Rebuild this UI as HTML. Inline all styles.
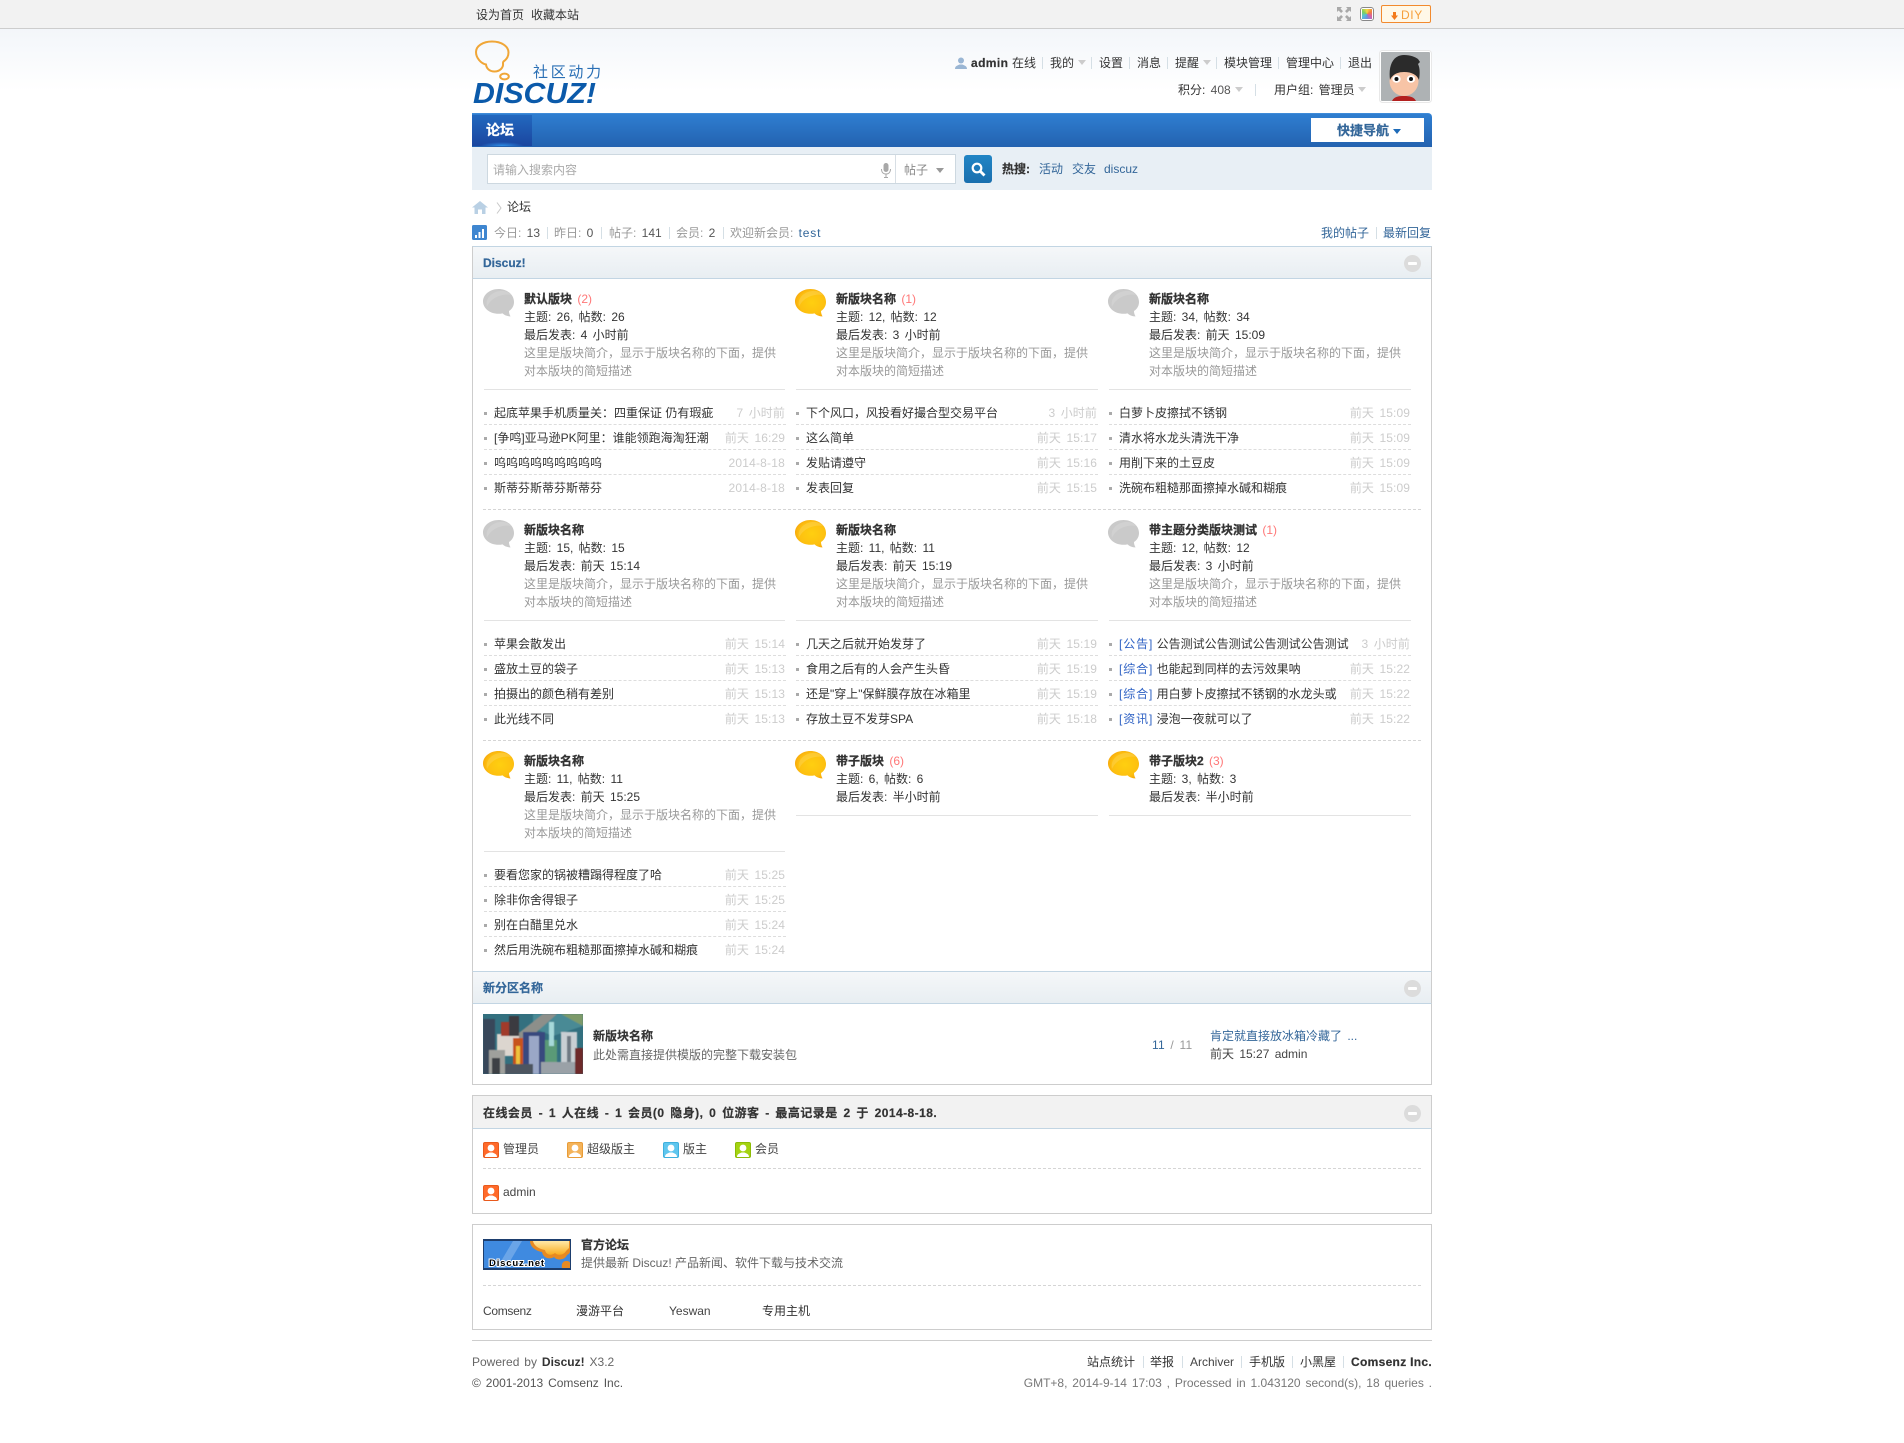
<!DOCTYPE html>
<html lang="zh"><head><meta charset="utf-8"><title>论坛 - Discuz!</title>
<style>
*{box-sizing:border-box;margin:0;padding:0}
html,body{width:1904px;height:1443px;overflow:hidden;background:#fff}
body{position:relative;font:12px/16px "Liberation Sans","WenQuanYi Zen Hei","Noto Sans CJK SC",sans-serif;color:#444;word-spacing:2px}
.a,.t{position:absolute}
.t{white-space:nowrap}
.b{font-weight:bold;-webkit-text-stroke:.2px}
.l{color:#369}
.g{color:#999}
.sep{position:absolute;color:#cdd;width:1px;height:12px;background:#d5dfe5}
.arr{position:absolute;width:0;height:0;border:4px solid transparent;border-top:5px solid #ccc;border-bottom:0}
.box{position:absolute;left:472px;width:960px;border:1px solid #cdcdcd}
.hd{position:absolute;left:472px;width:960px;height:33px;border:1px solid #c2d5e3;border-left-color:#cdcdcd;border-right-color:#cdcdcd;background:linear-gradient(#f5f7f9,#e8eef2)}
.col{position:absolute;left:1404px;width:17px;height:17px;border-radius:50%;background:#dcdcdc}
.col:after{content:"";position:absolute;left:4px;top:7px;width:9px;height:3px;background:#fff;border-radius:1px}
.f{position:absolute;width:302px}
.f svg{position:absolute;left:0;top:0}
.f div{position:absolute;left:41px;white-space:nowrap;height:18px;line-height:18px;color:#333}
.f .n{top:1px;font-weight:bold;font-size:12px;color:#333;word-spacing:0;-webkit-text-stroke:.3px}
.f .n i{font-style:normal;font-weight:normal;color:#f77;margin-left:2px;-webkit-text-stroke:0}
.f .s{top:19px}.f .m{top:37px}.f .d1{top:55px;color:#999}.f .d2{top:73px;color:#999}
.hr{position:absolute;height:1px;background:#e3e3e3}
.ul{position:absolute;width:302px}
.ul p{position:relative;height:25px;line-height:26px;border-bottom:1px dashed #ddd;padding-left:10px;white-space:nowrap;color:#333;word-spacing:0}
.ul p:last-child{border-bottom:0}
.ul p:before{content:"";position:absolute;left:0;top:12px;width:3px;height:3px;background:#aaa}
.ul p b{position:absolute;right:1px;top:0;font-weight:normal;color:#ccc;word-spacing:2px;letter-spacing:.1px}
.ul p u{text-decoration:none;color:#2f62c4;letter-spacing:.9px}
.dash{position:absolute;height:1px;border-top:1px dashed #d5d5d5}
.u{position:absolute;width:16px;height:16px;border-radius:2px}
</style></head><body>
<svg width="0" height="0" style="position:absolute"><defs>
<radialGradient id="gd" cx=".55" cy=".5" r=".6"><stop offset="0" stop-color="#ffcf10"/><stop offset=".7" stop-color="#fdc010"/><stop offset="1" stop-color="#f6a40c"/></radialGradient>
<symbol id="bub" viewBox="0 0 31 28"><path d="M15.5 0C24 0 31 5.5 31 13c0 4-2 7-5 9 0 2 .6 4 1.6 5.4-3 0-6-1-8-3-1.400.3-2.800.4-4.100.4C7 24.800 0 19.300 0 12.500 0 5.500 7 0 15.500 0z"/><path d="M4 18C2 9 9 3 17 2c5-.5 9 1 11 4C20 4.500 8 8 4 18z" fill="#fff" fill-opacity=".14"/></symbol>
<symbol id="usr" viewBox="0 0 14 14"><circle cx="7" cy="5" r="3.400" fill="#fff"/><path d="M1 14c0-3 2.500-3.500 4.500-4.500h3C10.500 10.500 13 11 13 14z" fill="#fff"/></symbol>
</defs></svg>

<!-- top bar -->
<div class="a" style="left:0;top:0;width:1904px;height:29px;background:#f2f2f2;border-bottom:1px solid #cdcdcd"></div>
<div class="a" style="left:0;top:29px;width:1904px;height:62px;background:linear-gradient(#f3f6fa,#fff)"></div>
<span class="t" style="left:476px;top:7px;color:#333">设为首页</span>
<span class="t" style="left:531px;top:7px;color:#333">收藏本站</span>
<svg class="a" style="left:1337px;top:7px" width="14" height="14" viewBox="0 0 14 14" fill="#a9a9a9"><path d="M0 0h5L3.500 1.600 6 4.100 4.100 6 1.600 3.500 0 5zM14 0v5l-1.600-1.500L9.900 6 8 4.100l2.500-2.500L9 0zM0 14V9l1.600 1.500L4.100 8 6 9.900l-2.500 2.500L5 14zM14 14H9l1.500-1.600L8 9.900 9.900 8l2.500 2.500L14 9z"/></svg>
<div class="a" style="left:1360px;top:7px;width:14px;height:14px;border:1px solid #888;border-radius:3px;background:#fff;padding:1px"><div style="width:10px;height:10px;background:conic-gradient(#f6d743,#f0823c,#d95fa8,#6d8fe0,#56c0d8,#7fcf5a,#f6d743)"></div></div>
<div class="a" style="left:1381px;top:5px;width:50px;height:18px;border:1px solid #f28a2e;border-radius:2px;background:#fff8e8"></div>
<svg class="a" style="left:1391px;top:12px" width="7" height="8" viewBox="0 0 7 8"><path d="M2 0h3v3.500h2L3.500 8 0 3.500h2z" fill="#f37b1d"/></svg>
<span class="t" style="left:1401px;top:7px;font-size:12px;color:#f6a03d;letter-spacing:.6px">DIY</span>

<!-- logo -->
<svg class="a" style="left:472px;top:38px" width="132" height="68" viewBox="0 0 132 68">
<path d="M20 3.500C29 3.500 36.500 8 36.500 14.500c0 4-2 7-5 9-.5.5-.5 1-.5 2 .5 4-3 8-8.500 8-5 0-8-3-8.500-7C9 25.500 4 20 4 14 4 8 11 3.500 20 3.500z" fill="none" stroke="#f0a637" stroke-width="2"/>
<ellipse cx="32.500" cy="38.500" rx="4.300" ry="2.900" fill="none" stroke="#f0a637" stroke-width="2"/>
<text x="61" y="39" font-family="'WenQuanYi Zen Hei','Noto Sans CJK SC',sans-serif" font-size="15" fill="#2a6fb5" letter-spacing="2.700" word-spacing="0">社区动力</text>
<text x="1" y="65" font-family="'Liberation Sans',sans-serif" font-weight="bold" font-style="italic" font-size="29" fill="#0b5aaa" textLength="123" lengthAdjust="spacingAndGlyphs">DISCUZ!</text>
</svg>

<!-- user nav -->
<svg class="a" style="left:955px;top:57px" width="12" height="12" viewBox="0 0 12 12"><circle cx="6" cy="3.500" r="3" fill="#9ab6d4"/><path d="M0 12c0-3 2.500-3.500 4.500-4.500h3C9.500 8.500 12 9 12 12z" fill="#9ab6d4"/></svg>
<span class="t b" style="left:971px;top:55px;color:#333;letter-spacing:.4px">admin</span>
<span class="t" style="left:1012px;top:55px;color:#333">在线</span>
<i class="sep" style="left:1042px;top:57px"></i>
<span class="t" style="left:1050px;top:55px;color:#333">我的</span><i class="arr" style="left:1078px;top:60px"></i>
<i class="sep" style="left:1091px;top:57px"></i>
<span class="t" style="left:1099px;top:55px;color:#333">设置</span>
<i class="sep" style="left:1129px;top:57px"></i>
<span class="t" style="left:1137px;top:55px;color:#333">消息</span>
<i class="sep" style="left:1167px;top:57px"></i>
<span class="t" style="left:1175px;top:55px;color:#333">提醒</span><i class="arr" style="left:1203px;top:60px"></i>
<i class="sep" style="left:1216px;top:57px"></i>
<span class="t" style="left:1224px;top:55px;color:#333">模块管理</span>
<i class="sep" style="left:1278px;top:57px"></i>
<span class="t" style="left:1286px;top:55px;color:#333">管理中心</span>
<i class="sep" style="left:1340px;top:57px"></i>
<span class="t" style="left:1348px;top:55px;color:#333">退出</span>
<span class="t" style="left:1178px;top:82px;color:#333">积分: <span style="color:#555">408</span></span><i class="arr" style="left:1235px;top:87px"></i>
<i class="sep" style="left:1255px;top:84px"></i>
<span class="t" style="left:1274px;top:82px;color:#333">用户组: 管理员</span><i class="arr" style="left:1358px;top:87px"></i>
<svg class="a" style="left:1379px;top:50px" width="53" height="53" viewBox="0 0 53 53">
<rect x=".5" y=".5" width="52" height="52" rx="3" fill="#fff" stroke="#e8e8e8"/>
<rect x="2" y="2" width="49" height="49" rx="1" fill="#aeb2b4"/>
<ellipse cx="25" cy="31" rx="14.500" ry="15" fill="#f7c4a6"/>
<path d="M11 30C9 14 15 5 25 5c7 0 11 2 14 4l2 3-2 2c2 4 2 9 1 16-2-5-7-8-15-8-7 0-12 3-14 8z" fill="#2b2b2b"/>
<ellipse cx="17.500" cy="29" rx="4.200" ry="3.800" fill="#fff"/><ellipse cx="32" cy="29" rx="4.200" ry="3.800" fill="#fff"/>
<circle cx="17.500" cy="29" r="2" fill="#111"/><circle cx="32" cy="29" r="2" fill="#111"/>
<path d="M13 51c2-4 6-5 12-5s10 1 12 5z" fill="#b3201f"/>
</svg>

<!-- nav -->
<div class="a" style="left:472px;top:113px;width:960px;height:34px;background:linear-gradient(#2f7ed1,#2362b0);border-top:1px solid #3f8bd8;border-radius:0 4px 0 0"></div>
<div class="a" style="left:472px;top:115px;width:60px;height:31px;background:radial-gradient(ellipse 22px 4px at 50% 100%,#2d8fe8,transparent),linear-gradient(#2268bf,#1b46a0)"></div>
<span class="t b" style="left:486px;top:122px;color:#fff;font-size:14px">论坛</span>
<div class="a" style="left:1311px;top:118px;width:113px;height:24px;background:#fff"></div>
<span class="t b" style="left:1337px;top:123px;color:#369;font-size:13px">快捷导航</span>
<i class="arr" style="left:1393px;top:129px;border-top-color:#1e6bb8"></i>

<!-- search -->
<div class="a" style="left:472px;top:147px;width:960px;height:43px;background:#e8eff5"></div>
<div class="a" style="left:487px;top:154px;width:469px;height:30px;background:#fff;border:1px solid #cdd8e0"></div>
<div class="a" style="left:895px;top:155px;width:1px;height:28px;background:#d8dfe5"></div>
<span class="t" style="left:493px;top:162px;color:#aaa">请输入搜索内容</span>
<svg class="a" style="left:881px;top:163px" width="10" height="15" viewBox="0 0 10 15" fill="#a8a8a8"><rect x="2.500" width="5" height="9" rx="2.500"/><path d="M0 6h1c0 3 1.500 4.500 4 4.500S9 9 9 6h1c0 3.500-2 5.300-4.500 5.500V14H7v1H3v-1h1.500v-2.500C2 11.300 0 9.500 0 6z"/></svg>
<span class="t" style="left:904px;top:162px;color:#888">帖子</span>
<i class="arr" style="left:936px;top:168px;border-top-color:#999"></i>
<div class="a" style="left:964px;top:155px;width:28px;height:28px;background:linear-gradient(#2185c5,#1a6fae);border-radius:3px"></div>
<svg class="a" style="left:971px;top:162px" width="15" height="15" viewBox="0 0 15 15" fill="none" stroke="#fff"><circle cx="6" cy="6" r="4.300" stroke-width="2.200"/><path d="M9.500 9.500l4 4" stroke-width="2.800"/></svg>
<span class="t b" style="left:1002px;top:161px;color:#333">热搜:</span>
<span class="t l" style="left:1039px;top:161px">活动</span>
<span class="t l" style="left:1072px;top:161px">交友</span>
<span class="t l" style="left:1104px;top:161px">discuz</span>

<!-- crumbs -->
<svg class="a" style="left:472px;top:201px" width="16" height="13" viewBox="0 0 16 13"><path d="M8 0l8 6.500h-2.500V13H10V8.500H6V13H2.500V6.500H0z" fill="#b9d0e4"/></svg>
<svg class="a" style="left:496px;top:202px" width="6" height="12" viewBox="0 0 6 12"><path d="M1 .5L5 6 1 11.500" fill="none" stroke="#c8c8c8"/></svg>
<span class="t" style="left:507px;top:199px;color:#333">论坛</span>

<!-- stats -->
<svg class="a" style="left:472px;top:225px" width="15" height="15" viewBox="0 0 15 15"><rect width="15" height="15" rx="1.500" fill="#3f86d0"/><path d="M3 10h2v3H3zM6.500 7h2v6h-2zM10 4h2v9h-2z" fill="#fff"/></svg>
<span class="t g" style="left:494px;top:225px">今日: <span style="color:#555">13</span></span>
<i class="sep" style="left:547px;top:227px"></i>
<span class="t g" style="left:554px;top:225px">昨日: <span style="color:#555">0</span></span>
<i class="sep" style="left:601px;top:227px"></i>
<span class="t g" style="left:609px;top:225px">帖子: <span style="color:#555">141</span></span>
<i class="sep" style="left:669px;top:227px"></i>
<span class="t g" style="left:676px;top:225px">会员: <span style="color:#555">2</span></span>
<i class="sep" style="left:723px;top:227px"></i>
<span class="t g" style="left:730px;top:225px">欢迎新会员: <span class="l" style="letter-spacing:.8px">test</span></span>
<span class="t l" style="left:1321px;top:225px">我的帖子</span>
<i class="sep" style="left:1376px;top:227px"></i>
<span class="t l" style="left:1383px;top:225px">最新回复</span>

<!-- main -->
<div class="box" style="top:246px;height:839px"></div>
<div class="hd" style="top:246px"></div>
<span class="t b l" style="left:483px;top:255px">Discuz!</span>
<i class="col" style="top:255px"></i>

<div class="f" style="left:483px;top:289px"><svg width="31" height="28"><use href="#bub" fill="#cacaca"/></svg><div class="n">默认版块 <i>(2)</i></div><div class="s">主题: 26, 帖数: 26</div><div class="m">最后发表: 4 小时前</div><div class="d1">这里是版块简介，显示于版块名称的下面，提供</div><div class="d2">对本版块的简短描述</div></div>
<div class="f" style="left:795px;top:289px"><svg width="31" height="28"><use href="#bub" fill="url(#gd)"/></svg><div class="n">新版块名称 <i>(1)</i></div><div class="s">主题: 12, 帖数: 12</div><div class="m">最后发表: 3 小时前</div><div class="d1">这里是版块简介，显示于版块名称的下面，提供</div><div class="d2">对本版块的简短描述</div></div>
<div class="f" style="left:1108px;top:289px"><svg width="31" height="28"><use href="#bub" fill="#cacaca"/></svg><div class="n">新版块名称</div><div class="s">主题: 34, 帖数: 34</div><div class="m">最后发表: 前天 15:09</div><div class="d1">这里是版块简介，显示于版块名称的下面，提供</div><div class="d2">对本版块的简短描述</div></div>
<div class="hr" style="left:484px;top:389px;width:301px"></div><div class="hr" style="left:796px;top:389px;width:302px"></div><div class="hr" style="left:1109px;top:389px;width:302px"></div>
<div class="ul" style="left:484px;top:400px"><p>起底苹果手机质量关：四重保证 仍有瑕疵<b>7 小时前</b></p><p>[争鸣]亚马逊PK阿里：谁能领跑海淘狂潮<b>前天 16:29</b></p><p>呜呜呜呜呜呜呜呜呜<b style="letter-spacing:.2px">2014-8-18</b></p><p>斯蒂芬斯蒂芬斯蒂芬<b style="letter-spacing:.2px">2014-8-18</b></p></div>
<div class="ul" style="left:796px;top:400px"><p>下个风口，风投看好撮合型交易平台<b>3 小时前</b></p><p>这么简单<b>前天 15:17</b></p><p>发贴请遵守<b>前天 15:16</b></p><p>发表回复<b>前天 15:15</b></p></div>
<div class="ul" style="left:1109px;top:400px"><p>白萝卜皮擦拭不锈钢<b>前天 15:09</b></p><p>清水将水龙头清洗干净<b>前天 15:09</b></p><p>用削下来的土豆皮<b>前天 15:09</b></p><p>洗碗布粗糙那面擦掉水碱和糊痕<b>前天 15:09</b></p></div>
<div class="dash" style="left:483px;top:509px;width:938px"></div>

<div class="f" style="left:483px;top:520px"><svg width="31" height="28"><use href="#bub" fill="#cacaca"/></svg><div class="n">新版块名称</div><div class="s">主题: 15, 帖数: 15</div><div class="m">最后发表: 前天 15:14</div><div class="d1">这里是版块简介，显示于版块名称的下面，提供</div><div class="d2">对本版块的简短描述</div></div>
<div class="f" style="left:795px;top:520px"><svg width="31" height="28"><use href="#bub" fill="url(#gd)"/></svg><div class="n">新版块名称</div><div class="s">主题: 11, 帖数: 11</div><div class="m">最后发表: 前天 15:19</div><div class="d1">这里是版块简介，显示于版块名称的下面，提供</div><div class="d2">对本版块的简短描述</div></div>
<div class="f" style="left:1108px;top:520px"><svg width="31" height="28"><use href="#bub" fill="#cacaca"/></svg><div class="n">带主题分类版块测试 <i>(1)</i></div><div class="s">主题: 12, 帖数: 12</div><div class="m">最后发表: 3 小时前</div><div class="d1">这里是版块简介，显示于版块名称的下面，提供</div><div class="d2">对本版块的简短描述</div></div>
<div class="hr" style="left:484px;top:620px;width:301px"></div><div class="hr" style="left:796px;top:620px;width:302px"></div><div class="hr" style="left:1109px;top:620px;width:302px"></div>
<div class="ul" style="left:484px;top:631px"><p>苹果会散发出<b>前天 15:14</b></p><p>盛放土豆的袋子<b>前天 15:13</b></p><p>拍摄出的颜色稍有差别<b>前天 15:13</b></p><p>此光线不同<b>前天 15:13</b></p></div>
<div class="ul" style="left:796px;top:631px"><p>几天之后就开始发芽了<b>前天 15:19</b></p><p>食用之后有的人会产生头昏<b>前天 15:19</b></p><p>还是"穿上"保鲜膜存放在冰箱里<b>前天 15:19</b></p><p>存放土豆不发芽SPA<b>前天 15:18</b></p></div>
<div class="ul" style="left:1109px;top:631px"><p><u>[公告]</u> 公告测试公告测试公告测试公告测试<b>3 小时前</b></p><p><u>[综合]</u> 也能起到同样的去污效果呐<b>前天 15:22</b></p><p><u>[综合]</u> 用白萝卜皮擦拭不锈钢的水龙头或<b>前天 15:22</b></p><p><u>[资讯]</u> 浸泡一夜就可以了<b>前天 15:22</b></p></div>
<div class="dash" style="left:483px;top:740px;width:938px"></div>

<div class="f" style="left:483px;top:751px"><svg width="31" height="28"><use href="#bub" fill="url(#gd)"/></svg><div class="n">新版块名称</div><div class="s">主题: 11, 帖数: 11</div><div class="m">最后发表: 前天 15:25</div><div class="d1">这里是版块简介，显示于版块名称的下面，提供</div><div class="d2">对本版块的简短描述</div></div>
<div class="f" style="left:795px;top:751px"><svg width="31" height="28"><use href="#bub" fill="url(#gd)"/></svg><div class="n">带子版块 <i>(6)</i></div><div class="s">主题: 6, 帖数: 6</div><div class="m">最后发表: 半小时前</div></div>
<div class="f" style="left:1108px;top:751px"><svg width="31" height="28"><use href="#bub" fill="url(#gd)"/></svg><div class="n">带子版块2 <i>(3)</i></div><div class="s">主题: 3, 帖数: 3</div><div class="m">最后发表: 半小时前</div></div>
<div class="hr" style="left:484px;top:851px;width:301px"></div><div class="hr" style="left:796px;top:815px;width:302px"></div><div class="hr" style="left:1109px;top:815px;width:302px"></div>
<div class="ul" style="left:484px;top:862px"><p>要看您家的锅被糟蹋得程度了哈<b>前天 15:25</b></p><p>除非你舍得银子<b>前天 15:25</b></p><p>别在白醋里兑水<b>前天 15:24</b></p><p>然后用洗碗布粗糙那面擦掉水碱和糊痕<b>前天 15:24</b></p></div>

<!-- section 2 -->
<div class="hd" style="top:971px"></div>
<span class="t b l" style="left:483px;top:980px">新分区名称</span>
<i class="col" style="top:980px"></i>
<svg class="a" style="left:483px;top:1014px" width="100" height="60" viewBox="0 0 100 60">
<defs><filter id="bl"><feGaussianBlur stdDeviation=".5"/></filter></defs>
<rect width="100" height="60" fill="#33707f"/>
<g filter="url(#bl)">
<path d="M50 0h50v12L70 22 50 14z" fill="#4a8a95"/><path d="M78 0h22v12z" fill="#7d9a6a"/><path d="M60 0h14L40 30 32 22z" fill="#8d8f8a"/>
<rect x="0" y="5" width="12" height="55" fill="#39465a"/><rect x="14" y="20" width="22" height="22" fill="#dcd6cf"/><rect x="18" y="8" width="14" height="14" fill="#a13a2a"/><rect x="26" y="2" width="10" height="20" fill="#3a3a40"/>
<rect x="30" y="24" width="12" height="36" fill="#c7531d"/><rect x="33" y="32" width="4" height="20" fill="#eec23c"/><rect x="40" y="18" width="22" height="42" fill="#384a7e"/><rect x="46" y="22" width="10" height="38" fill="#9aa7c7"/><rect x="62" y="26" width="12" height="34" fill="#5a9a77"/><rect x="66" y="8" width="5" height="24" fill="#a6d9d9"/>
<rect x="78" y="18" width="16" height="38" fill="#c9cfd3"/><rect x="84" y="22" width="4" height="30" fill="#6f7a83"/><rect x="92" y="34" width="8" height="26" fill="#6e2a2c"/><rect x="6" y="36" width="16" height="24" fill="#9fa09c"/><rect x="9" y="44" width="8" height="16" fill="#3c3f44"/><rect x="22" y="50" width="28" height="10" fill="#4e5560"/><rect x="58" y="48" width="34" height="12" fill="#9aa1a7"/>
</g>
</svg>
<span class="t b" style="left:593px;top:1028px;color:#333">新版块名称</span>
<span class="t" style="left:593px;top:1047px;color:#666">此处需直接提供模版的完整下载安装包</span>
<span class="t" style="left:1152px;top:1037px;color:#369;letter-spacing:.2px">11 <span style="color:#999">/ 11</span></span>
<span class="t l" style="left:1210px;top:1028px">肯定就直接放冰箱冷藏了 ...</span>
<span class="t" style="left:1210px;top:1046px;color:#444">前天 15:27 admin</span>

<!-- online -->
<div class="box" style="top:1095px;height:119px"></div>
<div class="a" style="left:472px;top:1095px;width:960px;height:34px;background:#f2f2f2;border:1px solid #cdcdcd;border-bottom-color:#c2d5e3"></div>
<span class="t b" style="left:483px;top:1105px;color:#333;letter-spacing:.45px">在线会员 - 1 人在线 - 1 会员(0 隐身), 0 位游客 - 最高记录是 2 于 2014-8-18.</span>
<i class="col" style="top:1105px"></i>
<div class="u" style="left:483px;top:1142px;background:#ff6a2a;border:1px solid #e95a1c"><svg width="14" height="14"><use href="#usr"/></svg></div>
<span class="t" style="left:503px;top:1141px">管理员</span>
<div class="u" style="left:567px;top:1142px;background:#f4b35a;border:1px solid #e89c38"><svg width="14" height="14"><use href="#usr"/></svg></div>
<span class="t" style="left:587px;top:1141px">超级版主</span>
<div class="u" style="left:663px;top:1142px;background:#5fc6ee;border:1px solid #3fb0dd"><svg width="14" height="14"><use href="#usr"/></svg></div>
<span class="t" style="left:683px;top:1141px">版主</span>
<div class="u" style="left:735px;top:1142px;background:#a4d311;border:1px solid #8cbb05"><svg width="14" height="14"><use href="#usr"/></svg></div>
<span class="t" style="left:755px;top:1141px">会员</span>
<div class="dash" style="left:483px;top:1168px;width:938px"></div>
<div class="u" style="left:483px;top:1185px;background:#ff6a2a;border:1px solid #e95a1c"><svg width="14" height="14"><use href="#usr"/></svg></div>
<span class="t" style="left:503px;top:1184px">admin</span>

<!-- links -->
<div class="box" style="top:1224px;height:106px"></div>
<svg class="a" style="left:483px;top:1239px" width="88" height="31" viewBox="0 0 88 31">
<defs><linearGradient id="ln" x1="0" y1="0" x2="0" y2="1"><stop offset="0" stop-color="#ffe9a8"/><stop offset="1" stop-color="#f9ad1f"/></linearGradient></defs>
<rect width="88" height="31" fill="#1d3e6e"/><rect x="1" y="2" width="86" height="27" fill="#3f8ae0"/>
<path d="M14 29L30 2h9L23 29z" fill="#6aa5e8"/>
<path d="M47 2c0 6 6 10 12 11 1 6 8 8 12 5 3 4 11 3 13-2 2-1 3-2 3-4V2z" fill="#e78a22"/>
<path d="M50 2c1 5 6 8 12 9 1 5 6 6 10 3 3 3 9 2 11-2 1-1 2-2 3-3V2z" fill="url(#ln)"/>
<path d="M79 29c-1-4 1-7 4-7s4 1 4 2v5z" fill="#e78a22"/>
<text x="6" y="27" font-family="'Liberation Sans',sans-serif" font-weight="bold" font-size="9.500" fill="#000" stroke="#fff" stroke-width="2" paint-order="stroke" textLength="55" word-spacing="0">Discuz.net</text>
</svg>
<span class="t b" style="left:581px;top:1237px;color:#333">官方论坛</span>
<span class="t" style="left:581px;top:1255px;color:#666;word-spacing:0">提供最新 Discuz! 产品新闻、软件下载与技术交流</span>
<div class="dash" style="left:483px;top:1285px;width:938px"></div>
<span class="t" style="left:483px;top:1303px;color:#444;letter-spacing:-.3px">Comsenz</span>
<span class="t" style="left:576px;top:1303px;color:#333">漫游平台</span>
<span class="t" style="left:669px;top:1303px;color:#444">Yeswan</span>
<span class="t" style="left:762px;top:1303px;color:#333">专用主机</span>

<!-- footer -->
<div class="a" style="left:472px;top:1340px;width:960px;height:1px;background:#cdcdcd"></div>
<span class="t" style="left:472px;top:1354px;color:#666;word-spacing:1.6px">Powered by <b style="color:#333">Discuz!</b> X3.2</span>
<span class="t" style="left:472px;top:1375px;color:#555;word-spacing:1.6px">© 2001-2013 Comsenz Inc.</span>
<span class="t" style="left:1087px;top:1354px;color:#333">站点统计</span><i class="sep" style="left:1143px;top:1356px"></i>
<span class="t" style="left:1150px;top:1354px;color:#333">举报</span><i class="sep" style="left:1182px;top:1356px"></i>
<span class="t" style="left:1190px;top:1354px;color:#444">Archiver</span><i class="sep" style="left:1241px;top:1356px"></i>
<span class="t" style="left:1249px;top:1354px;color:#333">手机版</span><i class="sep" style="left:1292px;top:1356px"></i>
<span class="t" style="left:1300px;top:1354px;color:#333">小黑屋</span><i class="sep" style="left:1343px;top:1356px"></i>
<span class="t b" style="right:472px;top:1354px;color:#333;letter-spacing:.3px;word-spacing:0">Comsenz Inc.</span>
<span class="t" style="right:472px;top:1375px;color:#777;word-spacing:1.5px">GMT+8, 2014-9-14 17:03 , Processed in 1.043120 second(s), 18 queries .</span>
</body></html>
